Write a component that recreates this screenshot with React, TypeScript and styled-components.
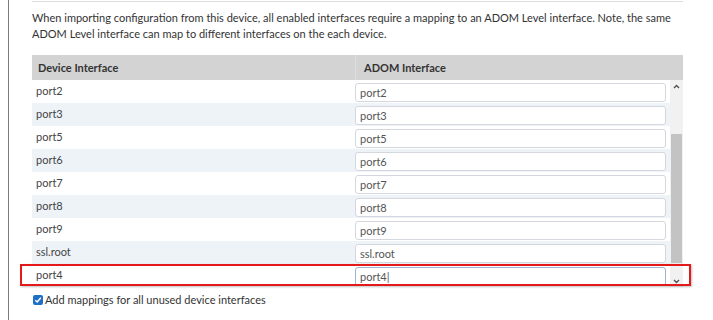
import React from "react";
import styled, { createGlobalStyle } from "styled-components";

const GlobalStyle = createGlobalStyle`
  html, body {
    margin: 0;
    background: #ffffff;
    font-family: Lato, "Open Sans", Arial, sans-serif;
  }
`;

const Page = styled.div`
  width: 713px;
  height: 320px;
  padding-left: 8px;
  box-sizing: border-box;
  overflow: hidden;
`;

const Frame = styled.div`
  height: 100%;
  border-left: 1px solid #7c7c7c;
  padding-left: 23px;
  display: flex;
  flex-direction: column;
`;

const TopRule = styled.div`
  width: 651px;
  height: 1px;
  border-bottom: 1px solid #dcdcdc;
`;

const Note = styled.p`
  width: 651px;
  margin: 8px 0 0;
  font-size: 11px;
  line-height: 16px;
  color: #333333;
`;

const Table = styled.div`
  position: relative;
  width: 651px;
  margin-top: 13px;
`;

const HeaderRow = styled.div`
  display: grid;
  grid-template-columns: 323px 1fr;
  height: 25px;
  background: #d3d3d3;
`;

const HeaderCell = styled.div<{ $divider?: boolean }>`
  display: flex;
  align-items: center;
  padding-left: ${(p) => (p.$divider ? "8px" : "6px")};
  font-size: 11px;
  font-weight: 700;
  color: #333333;
  border-left: ${(p) => (p.$divider ? "1px solid #dedede" : "none")};
`;

const Body = styled.div`
  display: flex;
`;

const Rows = styled.div`
  width: 638px;
`;

const Row = styled.div<{ $alt: boolean }>`
  display: grid;
  grid-template-columns: 323px 1fr;
  height: 23px;
  background: ${(p) => (p.$alt ? "#eef3f8" : "#ffffff")};
`;

const DeviceCell = styled.div`
  padding: 4px 0 0 4px;
  font-size: 11px;
  color: #444444;
`;

const AdomCell = styled.div`
  padding: 3px 4px 0 0;
`;

const TextInput = styled.input<{ $focused?: boolean }>`
  display: block;
  width: 100%;
  height: 19px;
  box-sizing: border-box;
  border: 1px solid ${(p) => (p.$focused ? "#9bb6d6" : "#d4d8de")};
  border-radius: 3px;
  padding: 0 4px;
  font-family: Lato, "Open Sans", Arial, sans-serif;
  font-size: 11px;
  color: #555555;
  background: #ffffff;
  outline: none;
`;

const Scrollbar = styled.div`
  width: 13px;
  background: #f1f1f1;
  display: flex;
  flex-direction: column;
  align-items: center;
`;

const Arrow = styled.div`
  height: 12px;
  display: flex;
  align-items: center;
  justify-content: center;
`;

const Track = styled.div`
  flex: 1;
  width: 11px;
  display: flex;
  flex-direction: column;
  padding-top: 42px;
`;

const Thumb = styled.div`
  height: 129px;
  background: #c3c3c3;
`;

const Highlight = styled.div`
  position: absolute;
  left: -12px;
  top: 209px;
  width: 671px;
  height: 22px;
  border: 2px solid #e41a1a;
  box-sizing: border-box;
  box-shadow: 1px 1px 2px rgba(0, 0, 0, 0.25);
  pointer-events: none;
`;

const CheckRow = styled.label`
  display: flex;
  align-items: center;
  gap: 2px;
  margin-top: 6px;
  font-size: 11px;
  color: #333333;
`;

const CheckBox = styled.span`
  width: 10px;
  height: 10px;
  margin-left: 1px;
  border-radius: 2px;
  background: #1f6fc4;
  display: flex;
  align-items: center;
  justify-content: center;
`;

const rows = ["port2", "port3", "port5", "port6", "port7", "port8", "port9", "ssl.root", "port4"];

const Chevron = ({ up }: { up?: boolean }) => (
  <svg width="7" height="5" viewBox="0 0 7 5">
    <path
      d={up ? "M1 4 L3.5 1.5 L6 4" : "M1 1 L3.5 3.5 L6 1"}
      fill="none"
      stroke="#505050"
      strokeWidth="1.4"
    />
  </svg>
);

export default function App() {
  return (
    <>
      <GlobalStyle />
      <Page>
        <Frame>
          <TopRule />
          <Note>
            When importing configuration from this device, all enabled interfaces require a mapping to an ADOM Level
            interface. Note, the same ADOM Level interface can map to different interfaces on the each device.
          </Note>
          <Table>
            <HeaderRow>
              <HeaderCell>Device Interface</HeaderCell>
              <HeaderCell $divider>ADOM Interface</HeaderCell>
            </HeaderRow>
            <Body>
              <Rows>
                {rows.map((name, i) => (
                  <Row key={name} $alt={i % 2 === 1}>
                    <DeviceCell>{name}</DeviceCell>
                    <AdomCell>
                      <TextInput
                        readOnly
                        $focused={i === rows.length - 1}
                        value={i === rows.length - 1 ? name + "|" : name}
                      />
                    </AdomCell>
                  </Row>
                ))}
              </Rows>
              <Scrollbar>
                <Arrow>
                  <Chevron up />
                </Arrow>
                <Track>
                  <Thumb />
                </Track>
                <Arrow>
                  <Chevron />
                </Arrow>
              </Scrollbar>
            </Body>
            <Highlight />
          </Table>
          <CheckRow>
            <CheckBox>
              <svg width="8" height="8" viewBox="0 0 8 8">
                <path d="M1.3 4.2 L3.2 6 L6.8 1.8" fill="none" stroke="#ffffff" strokeWidth="1.5" />
              </svg>
            </CheckBox>
            Add mappings for all unused device interfaces
          </CheckRow>
        </Frame>
      </Page>
    </>
  );
}
